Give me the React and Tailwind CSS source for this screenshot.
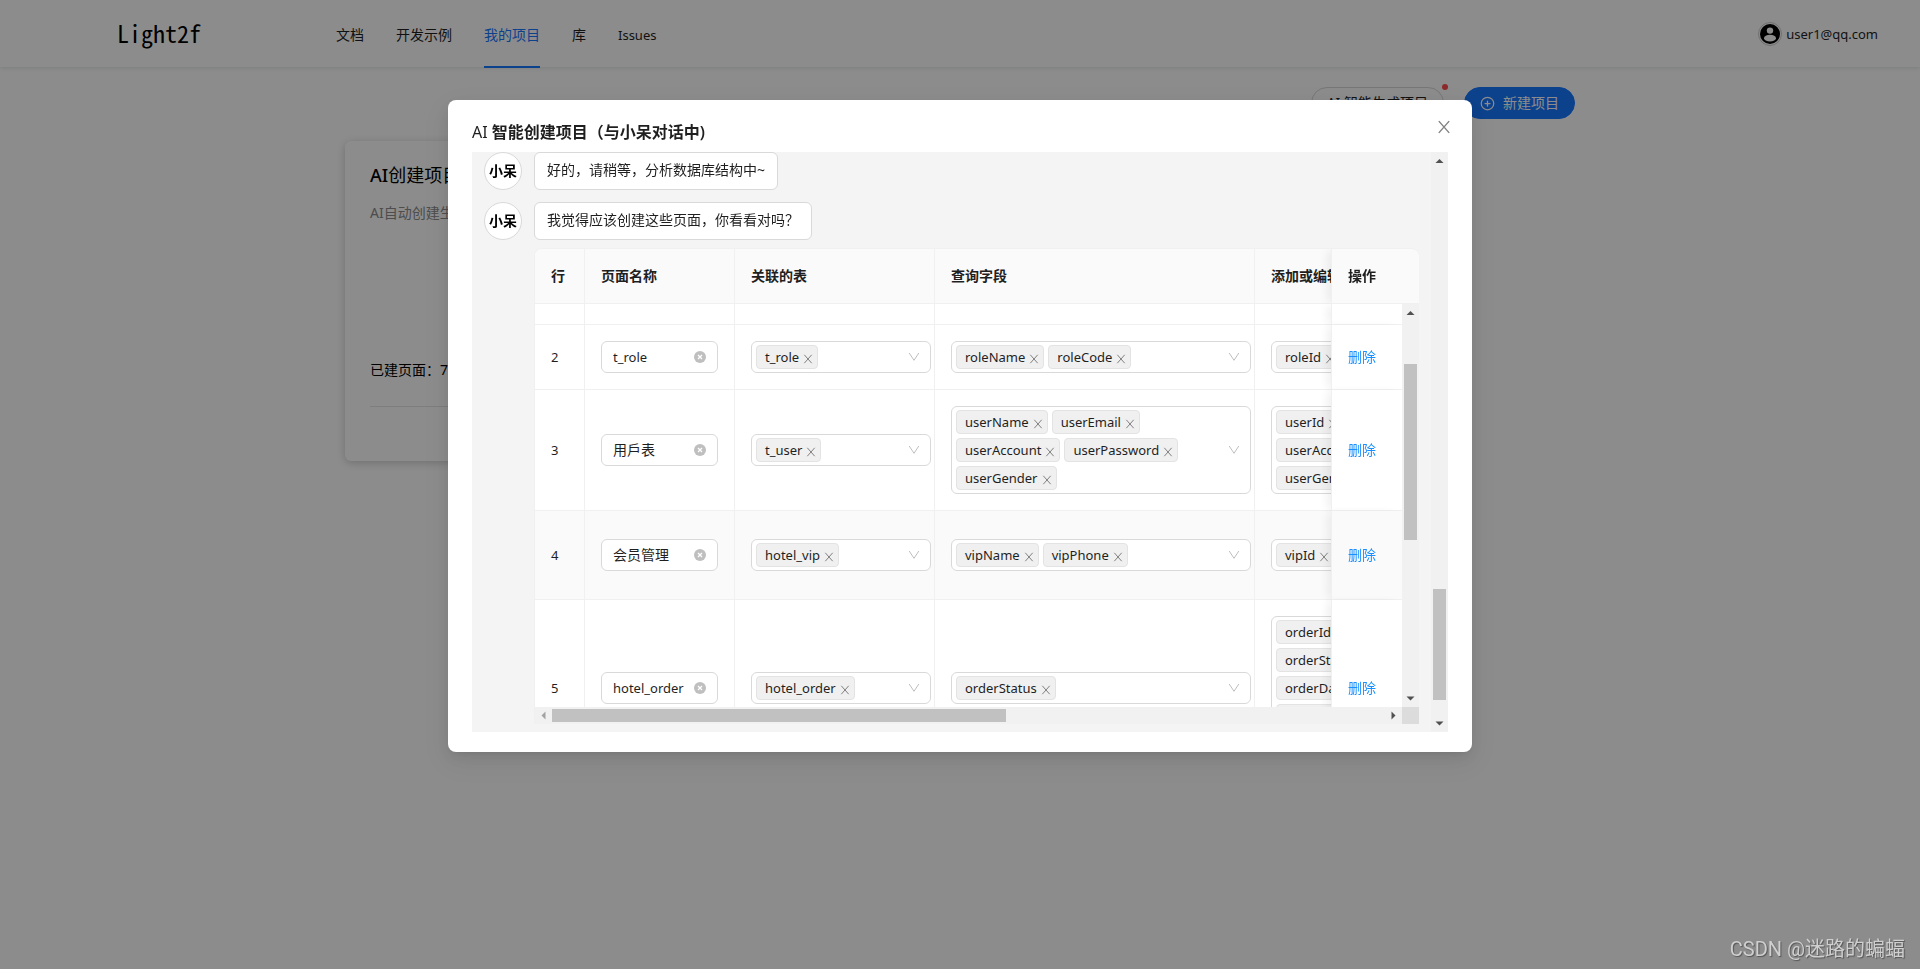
import React, { useState } from "react";
import { CirclePlus } from "lucide-react";

const NAV_ITEMS = ["文档", "开发示例", "我的项目", "库", "Issues"];

const PAGES = [
  { id: 2, name: "t_role", tables: ["t_role"], query: ["roleName", "roleCode"], edit: ["roleId"], height: "h-[65px]" },
  {
    id: 3,
    name: "用戶表",
    tables: ["t_user"],
    query: ["userName", "userEmail", "userAccount", "userPassword", "userGender"],
    edit: ["userId", "userAccount", "userGender"],
    height: "h-[121px]",
  },
  { id: 4, name: "会员管理", tables: ["hotel_vip"], query: ["vipName", "vipPhone"], edit: ["vipId"], height: "h-[89px]", striped: true },
  {
    id: 5,
    name: "hotel_order",
    tables: ["hotel_order"],
    query: ["orderStatus"],
    edit: ["orderId", "orderStatus", "orderDate", "orderPrice", "orderRemark"],
    height: "h-[177px]",
  },
];

const CloseIcon = ({ className }) => (
  <svg viewBox="0 0 10 10" className={className} fill="none" stroke="currentColor" aria-hidden="true">
    <path d="M1.3 0.8 L8.7 9.2 M8.7 0.8 L1.3 9.2" />
  </svg>
);

const Arrow = ({ dir, muted }) => {
  const points = {
    up: "4.5,11 8.5,7 12.5,11",
    down: "4.5,6.5 8.5,10.5 12.5,6.5",
    left: "10.5,4.5 6.5,8.5 10.5,12.5",
    right: "6.5,4.5 10.5,8.5 6.5,12.5",
  };
  return (
    <svg viewBox="0 0 17 17" className="size-[17px] shrink-0" aria-hidden="true">
      <polygon points={points[dir]} fill={muted ? "#a3a3a3" : "#505050"} />
    </svg>
  );
};

const Tag = ({ label, onRemove }) => (
  <span className="flex h-6 shrink-0 items-center gap-1 rounded border border-[#e3e3e3] bg-[#f0f0f0] pr-1 pl-2 text-[13px] whitespace-nowrap">
    {label}
    <button type="button" aria-label={`移除 ${label}`} onClick={onRemove} className="pt-1 text-[#808080]">
      <CloseIcon className="size-[10px]" />
    </button>
  </span>
);

const TagSelect = ({ tags, className }) => {
  const [items, setItems] = useState(tags);
  return (
    <div className={`flex items-center rounded-md border border-[#d9d9d9] bg-white py-[3px] pr-[10px] pl-1 ${className}`}>
      <div className="flex min-h-6 flex-1 flex-wrap gap-1">
        {items.map((item) => (
          <Tag key={item} label={item} onRemove={() => setItems(items.filter((i) => i !== item))} />
        ))}
      </div>
      <svg viewBox="0 0 12 12" className="size-3 shrink-0" fill="none" stroke="#bfbfbf" aria-hidden="true">
        <path d="M1.2 2 L6 9.3 L10.8 2" />
      </svg>
    </div>
  );
};

const NameInput = ({ value, id }) => {
  const [name, setName] = useState(value);
  return (
    <div className="flex h-8 items-center rounded-md border border-[#d9d9d9] bg-white px-[11px]">
      <input
        type="text"
        aria-label={`第${id}行页面名称`}
        value={name}
        onChange={(e) => setName(e.target.value)}
        className={`w-full min-w-0 flex-1 outline-none ${/^\w+$/.test(name) ? "text-[13px]" : "text-sm"}`}
      />
      <button type="button" aria-label="清空" onClick={() => setName("")}>
        <svg viewBox="0 0 12 12" className="size-3" aria-hidden="true">
          <circle cx="6" cy="6" r="6" fill="#bfbfbf" />
          <path d="M4 4 L8 8 M8 4 L4 8" stroke="#fff" strokeWidth="1.2" />
        </svg>
      </button>
    </div>
  );
};

const ColGroup = () => (
  <colgroup>
    <col className="w-[50px]" />
    <col className="w-[150px]" />
    <col className="w-[200px]" />
    <col className="w-[320px]" />
    <col className="w-[320px]" />
    <col className="w-[71px]" />
  </colgroup>
);

const cell = "border-r border-b border-[#f0f0f0] px-4";
const fixedCell =
  "sticky right-0 border-b border-l border-[#f0f0f0] px-4 shadow-[-6px_0_8px_-2px_rgba(5,5,5,0.06)]";

const PageTable = () => (
  <div className="overflow-hidden rounded-t-lg border-t border-l border-[#f0f0f0]">
    <div className="flex bg-[#fafafa]">
      <div className="min-w-0 flex-1 overflow-hidden">
        <table className="w-[1111px] table-fixed border-separate border-spacing-0 text-left">
          <ColGroup />
          <thead>
            <tr className="h-[55px] bg-[#fafafa]">
              <th className={`${cell} font-semibold`}>行</th>
              <th className={`${cell} font-semibold`}>页面名称</th>
              <th className={`${cell} font-semibold`}>关联的表</th>
              <th className={`${cell} font-semibold`}>查询字段</th>
              <th className={`${cell} font-semibold`}>添加或编辑字段</th>
              <th className={`${fixedCell} bg-[#fafafa] font-semibold`}>操作</th>
            </tr>
          </thead>
        </table>
      </div>
      <div className="w-[17px] shrink-0 border-b border-[#f0f0f0]" />
    </div>

    <div className="flex h-[403px]">
      <div className="min-w-0 flex-1 overflow-hidden bg-white">
        <table aria-label="页面列表" className="w-[1111px] table-fixed border-separate border-spacing-0 text-left">
          <ColGroup />
          <tbody>
            <tr className="h-[21px]">
              <td className={cell} />
              <td className={cell} />
              <td className={cell} />
              <td className={cell} />
              <td className={cell} />
              <td className={`${fixedCell} bg-white`} />
            </tr>
            {PAGES.map((page) => (
              <tr key={page.id} className={`${page.height} ${page.striped ? "bg-[#fafafa]" : "bg-white"}`}>
                <td className={`${cell} text-[13px]`}>{page.id}</td>
                <td className={cell}>
                  <NameInput value={page.name} id={page.id} />
                </td>
                <td className={cell}>
                  <TagSelect tags={page.tables} className="w-[180px]" />
                </td>
                <td className={cell}>
                  <TagSelect tags={page.query} className="w-[300px]" />
                </td>
                <td className={cell}>
                  <TagSelect tags={page.edit} className={page.edit.length > 1 ? "w-[160px]" : "w-[300px]"} />
                </td>
                <td className={`${fixedCell} ${page.striped ? "bg-[#fafafa]" : "bg-white"}`}>
                  <a href="#delete" className="text-[#1890ff]">
                    删除
                  </a>
                </td>
              </tr>
            ))}
          </tbody>
        </table>
      </div>
      <div className="flex w-[17px] shrink-0 flex-col items-center bg-[#f1f1f1]">
        <Arrow dir="up" />
        <div className="flex flex-1 flex-col pt-[43px]">
          <div className="h-[176px] w-[13px] bg-[#c1c1c1]" />
        </div>
        <Arrow dir="down" />
      </div>
    </div>

    <div className="flex h-[17px]">
      <div className="flex flex-1 items-center bg-[#f1f1f1]">
        <Arrow dir="left" muted />
        <div className="flex-1">
          <div className="h-[13px] w-[454px] bg-[#c1c1c1]" />
        </div>
        <Arrow dir="right" />
      </div>
      <div className="w-[17px] bg-[#dcdcdc]" />
    </div>
  </div>
);

const Message = ({ children }) => (
  <div className="flex items-start gap-3">
    <div className="flex size-[38px] shrink-0 items-center justify-center rounded-full border border-[#d9d9d9] bg-white font-semibold text-black">
      小呆
    </div>
    <p className="h-[38px] rounded-md border border-[#d9d9d9] bg-white px-3 pt-[6px] leading-[22px]">{children}</p>
  </div>
);

const ChatDialog = () => (
  <div className="fixed inset-0 z-50 flex items-start justify-center bg-black/45 pt-[100px]">
    <div
      role="dialog"
      aria-modal="true"
      aria-labelledby="chat-title"
      className="relative w-full max-w-[1024px] rounded-lg bg-white px-6 pt-5 pb-5 shadow-[0_6px_16px_0_rgba(0,0,0,0.08),0_3px_6px_-4px_rgba(0,0,0,0.12),0_9px_28px_8px_rgba(0,0,0,0.05)]"
    >
      <h2 id="chat-title" className="mb-2 text-base leading-6 font-semibold">
        <span className="font-normal">AI</span> 智能创建项目（与小呆对话中)
      </h2>
      <button type="button" aria-label="关闭" className="absolute top-5 right-[21px] text-[#808080]">
        <CloseIcon className="size-[14px]" />
      </button>
      <div className="flex h-[580px] bg-[#f4f4f4]">
        <div className="flex min-w-0 flex-1 flex-col pr-3 pl-3">
          <div className="flex flex-col gap-3">
            <Message>好的，请稍等，分析数据库结构中~</Message>
            <Message>我觉得应该创建这些页面，你看看对吗？</Message>
          </div>
          <div className="mt-2 pl-[50px]">
            <PageTable />
          </div>
        </div>
        <div className="flex w-[17px] shrink-0 flex-col items-center bg-[#f1f1f1]">
          <Arrow dir="up" />
          <div className="flex flex-1 flex-col justify-end pb-[15px]">
            <div className="h-[111px] w-[13px] bg-[#c1c1c1]" />
          </div>
          <Arrow dir="down" />
        </div>
      </div>
    </div>
  </div>
);

const Header = () => (
  <header className="flex h-[67px] items-center bg-white pr-[42px] pl-[117px] shadow-[0_1px_4px_rgba(0,21,41,0.12)]">
    <div className="w-[203px] pb-[2px] font-['Noto_Sans_Mono_CJK_SC','Liberation_Mono',monospace] text-2xl text-black">
      Light2f
    </div>
    <nav className="flex h-full flex-1">
      {NAV_ITEMS.map((item) => (
        <a
          key={item}
          href="#nav"
          className={`mx-4 flex h-[68px] items-center border-b-2 pt-1 ${
            item === "我的项目" ? "border-[#1677ff] text-[#1677ff]" : "border-transparent"
          } ${/^\w+$/.test(item) ? "text-[13px]" : "text-sm"}`}
        >
          {item}
        </a>
      ))}
    </nav>
    <a href="#user" className="flex items-center gap-1 text-[13px]">
      <svg viewBox="0 0 24 24" className="size-6" aria-hidden="true">
        <circle cx="12" cy="12" r="11.5" fill="#fff" stroke="#ccc" />
        <circle cx="12" cy="12" r="10" fill="#000" />
        <circle cx="12" cy="8.6" r="3.2" fill="#fff" />
        <ellipse cx="12" cy="16.2" rx="6" ry="3.4" fill="#fff" />
      </svg>
      user1@qq.com
    </a>
  </header>
);

export default function App() {
  return (
    <div className="min-h-screen bg-white font-['Noto_Sans','Noto_Sans_CJK_SC',sans-serif] text-sm leading-[22px] text-[#1f1f1f]">
      <Header />
      <main className="mx-auto max-w-[1230px] pt-5">
        <div className="flex justify-end gap-5">
          <div className="relative">
            <button type="button" className="h-8 rounded-full border border-[#d9d9d9] px-[15px]">
              AI 智能生成项目
            </button>
            <span className="absolute -top-[3px] -right-1 size-[6px] rounded-full bg-[#ff4d4f]" />
          </div>
          <button
            type="button"
            className="flex h-8 items-center gap-2 rounded-full border border-[#1677ff] bg-[#1677ff] px-[15px] text-white"
          >
            <CirclePlus size={15} strokeWidth={2} />
            新建项目
          </button>
        </div>
        <section className="mt-[22px] flex h-80 w-[390px] flex-col rounded-md bg-white px-[25px] pt-[21px] shadow-[0_2px_8px_rgba(0,0,0,0.2)]">
          <h3 className="text-lg leading-[26px] text-black">
            <span className="font-medium">AI</span>创建项目
          </h3>
          <p className="mt-[14px] flex-1 text-[#8c8c8c]">AI自动创建生成</p>
          <p className="border-b border-[#e5e5e5] pb-[25px] text-black">已建页面：7</p>
          <div className="h-[54px]" />
        </section>
      </main>
      <ChatDialog />
      <footer className="fixed right-[15px] bottom-[5px] z-[60] font-['Roboto','Noto_Sans_CJK_SC',sans-serif] text-xl leading-[30px] text-[#cfcfcf] [text-shadow:1px_1px_1px_#555]">
        CSDN @迷路的蝙蝠
      </footer>
    </div>
  );
}
